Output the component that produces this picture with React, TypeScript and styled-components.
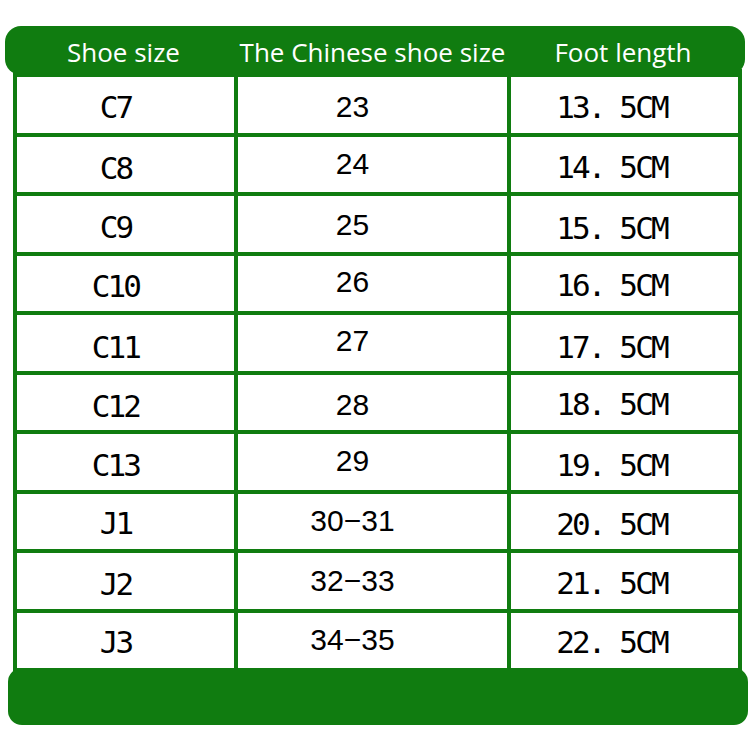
import styled, { createGlobalStyle } from 'styled-components'

const GREEN = '#107c10'

const GlobalStyle = createGlobalStyle`
  html, body {
    margin: 0;
    padding: 0;
    background: #ffffff;
  }
`;

const Page = styled.div`
  width: 750px;
  height: 750px;
  padding-top: 26px;
  box-sizing: border-box;
  background: #fff;
`;

const Frame = styled.div`
  width: 743px;
  margin-left: 5px;
  display: flex;
  flex-direction: column;
`;

const Header = styled.div`
  width: 740px;
  height: 49px;
  background: ${GREEN};
  border-radius: 16px;
  display: grid;
  grid-template-columns: 229px 273px 238px;
  align-items: center;
  color: #fff;
  font-family: 'Open Sans', 'Noto Sans', sans-serif;
  font-size: 26px;
  position: relative;
  z-index: 2;
`;

const HeadCell = styled.div<{ $shift?: number }>`
  text-align: center;
  padding-top: 3px;
  white-space: nowrap;
  transform: translateX(${({ $shift }) => $shift ?? 0}px);
`;

const Body = styled.div`
  margin-left: 8px;
  width: 729px;
  margin-top: -6px;
  padding: 8px 4px 12px;
  box-sizing: border-box;
  background: ${GREEN};
  display: grid;
  grid-template-columns: 217px 269px 227px;
  grid-template-rows: repeat(10, 55.5px);
  column-gap: 4px;
  row-gap: 4px;
  position: relative;
  z-index: 3;
`;

const Cell = styled.div<{ $kind: 'code' | 'cn' | 'len' }>`
  background: #fff;
  display: flex;
  align-items: center;
  justify-content: center;
  color: #000;
  white-space: pre;
  font-family: ${({ $kind }) => $kind === 'cn'
    ? "'Liberation Sans', Arial, sans-serif"
    : "'DejaVu Sans Mono', 'Liberation Mono', monospace"};
  font-size: ${({ $kind }) => $kind === 'cn' ? '30px' : '31px'};
  letter-spacing: ${({ $kind }) => $kind === 'cn' ? '0' : '-2.9px'};
`;

const CellText = styled.span<{ $dx: number; $dy: number }>`
  display: inline-block;
  transform: translate(${({ $dx }) => $dx}px, ${({ $dy }) => $dy}px);
`;

const Footer = styled.div`
  width: 740px;
  height: 57px;
  margin-left: 3px;
  margin-top: -12px;
  background: ${GREEN};
  border-radius: 14px;
  position: relative;
  z-index: 1;
`;

type Row = {
  code: string
  cn: string
  len: string
  off: [number, number, number]
}

const rows: Row[] = [
  { code: 'C7', cn: '23', len: '13. 5CM', off: [2, 2, 2] },
  { code: 'C8', cn: '24', len: '14. 5CM', off: [4, 0, 3] },
  { code: 'C9', cn: '25', len: '15. 5CM', off: [3, 1, 4] },
  { code: 'C10', cn: '26', len: '16. 5CM', off: [3, -1, 2] },
  { code: 'C11', cn: '27', len: '17. 5CM', off: [4, -2, 4] },
  { code: 'C12', cn: '28', len: '18. 5CM', off: [4, 3, 2] },
  { code: 'C13', cn: '29', len: '19. 5CM', off: [3, -1, 3] },
  { code: 'J1', cn: '30−31', len: '20. 5CM', off: [2, 0, 3] },
  { code: 'J2', cn: '32−33', len: '21. 5CM', off: [3, 0, 2] },
  { code: 'J3', cn: '34−35', len: '22. 5CM', off: [2, 0, 2] },
]

const xShift = {
  code: -10,
  cn: -20,
  len: -13,
}

export default function App() {
  return (
    <Page>
      <GlobalStyle />
      <Frame>
        <Header>
          <HeadCell $shift={4}>Shoe size</HeadCell>
          <HeadCell $shift={2}>The Chinese shoe size</HeadCell>
          <HeadCell $shift={-3}>Foot length</HeadCell>
        </Header>
        <Body>
          {rows.map((r) => (
            <>
              <Cell key={r.code + 'a'} $kind="code">
                <CellText $dx={xShift.code} $dy={r.off[0]}>{r.code}</CellText>
              </Cell>
              <Cell key={r.code + 'b'} $kind="cn">
                <CellText $dx={xShift.cn} $dy={r.off[1]}>{r.cn}</CellText>
              </Cell>
              <Cell key={r.code + 'c'} $kind="len">
                <CellText $dx={xShift.len} $dy={r.off[2]}>{r.len}</CellText>
              </Cell>
            </>
          ))}
        </Body>
        <Footer />
      </Frame>
    </Page>
  )
}
